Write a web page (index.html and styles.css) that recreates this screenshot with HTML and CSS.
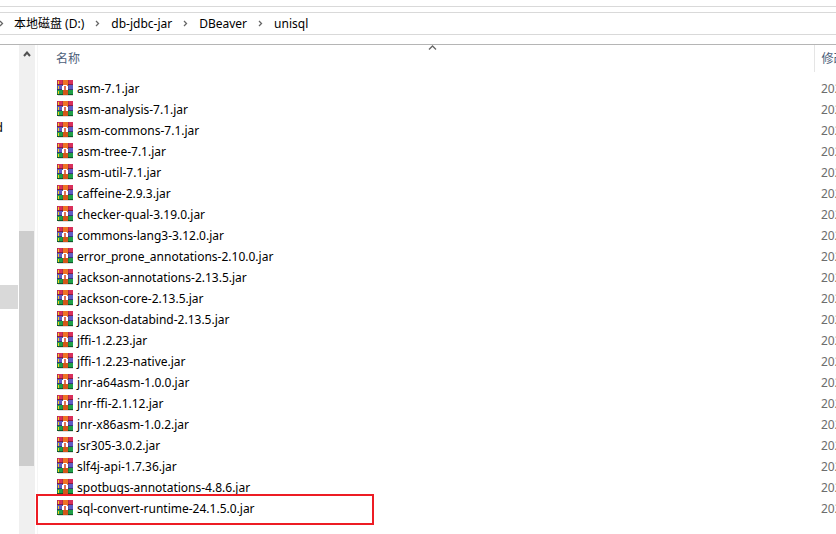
FILE: index.html
```html
<!DOCTYPE html>
<html lang="zh-CN">
<head>
<meta charset="utf-8">
<title>unisql</title>
<link rel="stylesheet" href="styles.css">
</head>
<body>
<svg class="defs" aria-hidden="true">
  <symbol id="archive" viewBox="0 0 16 16">
    <path fill="#d92f5b" d="M0 0h16v5H0z"/>
    <path fill="#5f5cc4" d="M0 5h16v5H0z"/>
    <path fill="#1fa048" d="M0 10h16v5H0z"/>
    <path fill="#8c1a42" d="M0 4h16v1H0z"/>
    <path fill="#37357c" d="M0 9h16v1H0z"/>
    <path fill="#0e5c2a" d="M0 14h16v1H0z"/>
    <path fill="#222" fill-opacity=".2" d="M0 0h1v15H0zM5 0h1v15H5zM11 0h1v15h-1z"/>
    <path fill="#f5d21c" d="M1 1h1v3H1zM1 6h1v3H1zM1 11h1v3H1z"/>
    <path fill="#ee7424" d="M6 0h5v15H6z"/>
    <path fill="#d4551a" d="M6 10h5v5H6z"/>
    <path fill="#fff" d="M6 5h4v1H6zM5 6h2v4H5zM9 6h2v4H9z"/>
    <path fill="#e0705a" d="M7 6h2v4H7z"/>
    <path fill="#ddd" d="M1 15h15v1H1z"/>
  </symbol>
</svg>
<header class="toolbar">
  <nav class="address" aria-label="路径">
    <svg class="sep" viewBox="0 0 5 7"><path d="M1 1l2.5 2.5L1 6"/></svg>
    <a href="#">本地磁盘 (D:)</a>
    <svg class="sep" viewBox="0 0 5 7"><path d="M1 1l2.5 2.5L1 6"/></svg>
    <a href="#">db-jdbc-jar</a>
    <svg class="sep" viewBox="0 0 5 7"><path d="M1 1l2.5 2.5L1 6"/></svg>
    <a href="#">DBeaver</a>
    <svg class="sep" viewBox="0 0 5 7"><path d="M1 1l2.5 2.5L1 6"/></svg>
    <a href="#">unisql</a>
  </nav>
</header>
<div class="explorer">
  <aside class="tree">
    <span class="tree-item">d</span>
    <span class="tree-selected"></span>
  </aside>
  <div class="scrollbar">
    <svg class="up" viewBox="0 0 8 6"><path d="M1 5l3-3.500 3 3.500"/></svg>
    <div class="thumb"></div>
  </div>
  <main class="files">
    <table>
      <thead>
        <tr>
          <th class="name">名称<svg class="sort" viewBox="0 0 9 5"><path d="M1 4.500L4.500 1 8 4.500"/></svg></th>
          <th class="date">修改</th>
        </tr>
      </thead>
      <tbody>
        <tr><td><span class="file"><svg><use href="#archive"/></svg>asm-7.1.jar</span></td><td class="date">202</td></tr>
        <tr><td><span class="file"><svg><use href="#archive"/></svg>asm-analysis-7.1.jar</span></td><td class="date">202</td></tr>
        <tr><td><span class="file"><svg><use href="#archive"/></svg>asm-commons-7.1.jar</span></td><td class="date">202</td></tr>
        <tr><td><span class="file"><svg><use href="#archive"/></svg>asm-tree-7.1.jar</span></td><td class="date">202</td></tr>
        <tr><td><span class="file"><svg><use href="#archive"/></svg>asm-util-7.1.jar</span></td><td class="date">202</td></tr>
        <tr><td><span class="file"><svg><use href="#archive"/></svg>caffeine-2.9.3.jar</span></td><td class="date">202</td></tr>
        <tr><td><span class="file"><svg><use href="#archive"/></svg>checker-qual-3.19.0.jar</span></td><td class="date">202</td></tr>
        <tr><td><span class="file"><svg><use href="#archive"/></svg>commons-lang3-3.12.0.jar</span></td><td class="date">202</td></tr>
        <tr><td><span class="file"><svg><use href="#archive"/></svg>error_prone_annotations-2.10.0.jar</span></td><td class="date">202</td></tr>
        <tr><td><span class="file"><svg><use href="#archive"/></svg>jackson-annotations-2.13.5.jar</span></td><td class="date">202</td></tr>
        <tr><td><span class="file"><svg><use href="#archive"/></svg>jackson-core-2.13.5.jar</span></td><td class="date">202</td></tr>
        <tr><td><span class="file"><svg><use href="#archive"/></svg>jackson-databind-2.13.5.jar</span></td><td class="date">202</td></tr>
        <tr><td><span class="file"><svg><use href="#archive"/></svg>jffi-1.2.23.jar</span></td><td class="date">202</td></tr>
        <tr><td><span class="file"><svg><use href="#archive"/></svg>jffi-1.2.23-native.jar</span></td><td class="date">202</td></tr>
        <tr><td><span class="file"><svg><use href="#archive"/></svg>jnr-a64asm-1.0.0.jar</span></td><td class="date">202</td></tr>
        <tr><td><span class="file"><svg><use href="#archive"/></svg>jnr-ffi-2.1.12.jar</span></td><td class="date">202</td></tr>
        <tr><td><span class="file"><svg><use href="#archive"/></svg>jnr-x86asm-1.0.2.jar</span></td><td class="date">202</td></tr>
        <tr><td><span class="file"><svg><use href="#archive"/></svg>jsr305-3.0.2.jar</span></td><td class="date">202</td></tr>
        <tr><td><span class="file"><svg><use href="#archive"/></svg>slf4j-api-1.7.36.jar</span></td><td class="date">202</td></tr>
        <tr><td><span class="file"><svg><use href="#archive"/></svg>spotbugs-annotations-4.8.6.jar</span></td><td class="date">202</td></tr>
        <tr><td><span class="file marked"><svg><use href="#archive"/></svg>sql-convert-runtime-24.1.5.0.jar</span></td><td class="date">202</td></tr>
      </tbody>
    </table>
  </main>
</div>
</body>
</html>
```
FILE: styles.css
```css
*, *::before, *::after { box-sizing: border-box; }

body {
  margin: 0;
  min-height: 100vh;
  display: flex;
  flex-direction: column;
  overflow: hidden;
  background: #fff;
  color: #000;
  font: 12px/20px "Noto Sans", "Noto Sans CJK SC", sans-serif;
}

.defs {
  position: absolute;
  width: 0;
  height: 0;
}

.toolbar {
  margin-top: 6px;
  padding: 5px 0 9px;
  border-top: 1px solid #d9d9d9;
  border-bottom: 1px solid #b5b5b5;
}

.address {
  display: flex;
  align-items: center;
  gap: 11px;
  height: 23px;
  border: solid #d9d9d9;
  border-width: 1px 0;
}

.address a {
  color: inherit;
  text-decoration: none;
  white-space: nowrap;
}

.sep {
  flex: none;
  width: 5px;
  height: 7px;
}

.sep:first-child { margin: 0 -1px; }

.sep path, .up path, .sort path {
  fill: none;
  stroke: #666;
  stroke-width: 1.3;
}

.explorer {
  flex: 1;
  display: flex;
}

.tree {
  width: 18px;
  margin-right: 1px;
  padding-top: 73px;
  overflow: hidden;
}

.tree-item {
  display: flex;
  justify-content: flex-end;
  width: 3px;
  height: 20px;
}

.tree-selected {
  display: block;
  height: 24px;
  margin-top: 147px;
  background: #d9d9d9;
}

.scrollbar {
  width: 16px;
  padding-top: 6px;
  background: #f0f0f0;
}

.up {
  display: block;
  width: 8px;
  height: 6px;
  margin-left: 4px;
}

.up path {
  stroke: #505050;
  stroke-width: 2;
}

.thumb {
  width: 15px;
  height: 235px;
  margin-top: 174px;
  background: #cdcdcd;
}

.files {
  flex: 1;
  min-width: 0;
  margin-left: 2px;
  padding-left: 12px;
  border-left: 1px solid #f5f5f5;
}

table {
  width: 100%;
  table-layout: fixed;
  border-collapse: collapse;
}

th, td {
  padding: 0;
  text-align: left;
  font-weight: normal;
}

th {
  height: 27px;
  padding-left: 6px;
  color: #4c607a;
}

th.name { position: relative; }

th.date {
  width: 22px;
  border-left: 1px solid #e5e5e5;
}

.date {
  padding-left: 7px;
  overflow: hidden;
  white-space: nowrap;
}

td.date { color: #6d6d6d; }

.sort {
  position: absolute;
  top: 0;
  left: 50%;
  width: 9px;
  height: 5px;
  margin-left: -4px;
}

tbody::before {
  content: "";
  display: block;
  height: 6px;
}

td { height: 21px; }

.file {
  position: relative;
  display: flex;
  align-items: center;
  gap: 4px;
  height: 21px;
  padding-left: 7px;
  white-space: nowrap;
}

.file svg {
  align-self: flex-start;
  width: 16px;
  height: 16px;
  margin-top: 2px;
}

.marked::after {
  content: "";
  position: absolute;
  top: -4px;
  left: -14px;
  width: 338px;
  height: 31px;
  border: 2px solid #ed1c24;
}
```
